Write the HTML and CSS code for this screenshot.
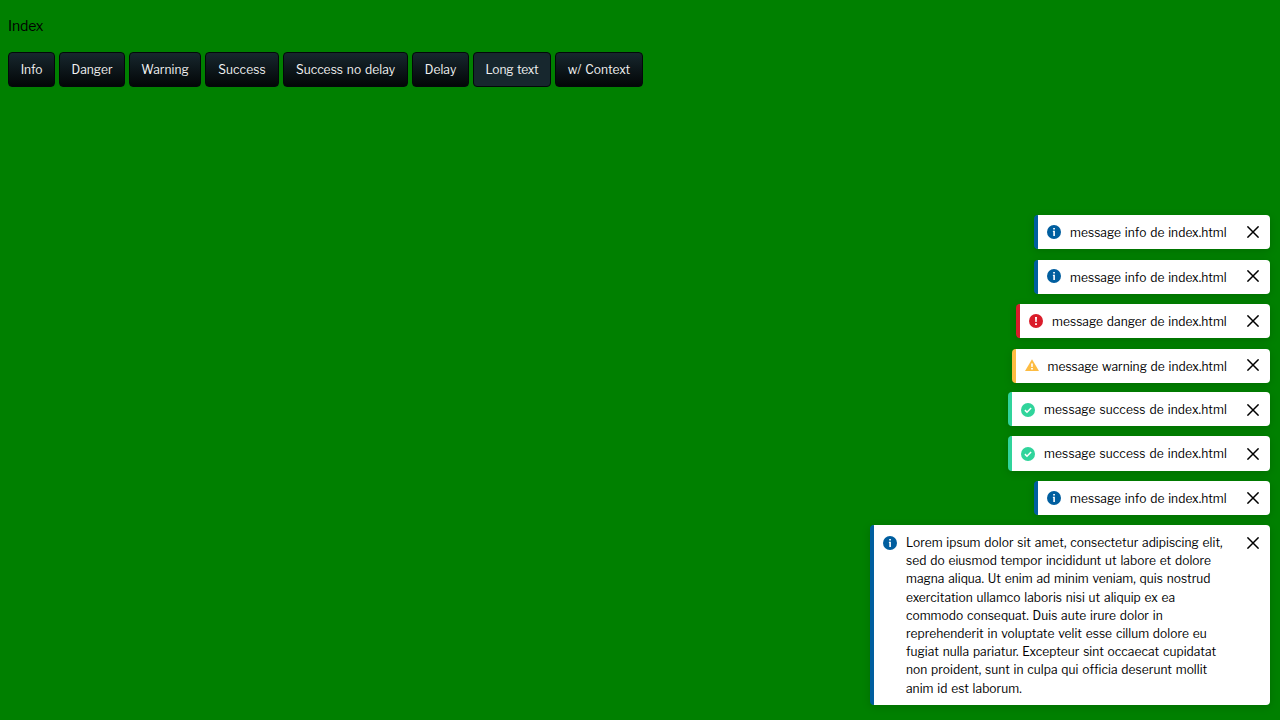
FILE: index.html
```
<!DOCTYPE html>
<html lang="en">
<head>
<meta charset="utf-8">
<title>Index</title>
<link rel="stylesheet" href="styles.css">
</head>
<body>
<svg class="defs" width="0" height="0">
  <symbol id="info" viewBox="0 0 14 14"><circle cx="7" cy="7" r="7" fill="currentColor"/><path fill="#fff" d="M6.2 3h1.7v1.6H6.2zM5.9 5.7h2V11H6.3V6.9h-.4z"/></symbol>
  <symbol id="danger" viewBox="0 0 14 14"><circle cx="7" cy="7" r="7" fill="currentColor"/><path fill="#fff" d="M6 3h2l-.3 5H6.3zM6.1 9.2h1.8V11H6.1z"/></symbol>
  <symbol id="warning" viewBox="0 0 14 14"><path fill="currentColor" d="M7 1.2l7 11.8H0z"/><path fill="#fff" d="M6.1 5.5h1.8l-.2 3.6H6.3zM6.1 10.1h1.8v1.5H6.1z"/></symbol>
  <symbol id="success" viewBox="0 0 14 14"><circle cx="7" cy="7" r="7" fill="currentColor"/><path fill="none" stroke="#fff" stroke-width="1.5" d="M3.9 7.1l2.1 2.1L10.1 5"/></symbol>
  <symbol id="close" viewBox="0 0 12 12"><path fill="none" stroke="#000" stroke-width="1.5" d="M.4.4l11.2 11.2M11.6.4L.4 11.6"/></symbol>
</svg>
<h1 class="title">Index</h1>
<nav class="buttons">
  <button class="btn info-btn">Info</button>
  <button class="btn danger-btn">Danger</button>
  <button class="btn warning-btn">Warning</button>
  <button class="btn success-btn">Success</button>
  <button class="btn nodelay-btn">Success no delay</button>
  <button class="btn delay-btn">Delay</button>
  <button class="btn long-btn active">Long text</button>
  <button class="btn context-btn">w/ Context</button>
</nav>
<section class="toasts">
  <div class="toast info"><svg class="icon"><use href="#info"/></svg><p class="text">message info de index.html</p><svg class="close"><use href="#close"/></svg></div>
  <div class="toast info raised"><svg class="icon"><use href="#info"/></svg><p class="text">message info de index.html</p><svg class="close"><use href="#close"/></svg></div>
  <div class="toast danger"><svg class="icon"><use href="#danger"/></svg><p class="text">message danger de index.html</p><svg class="close"><use href="#close"/></svg></div>
  <div class="toast warning raised"><svg class="icon"><use href="#warning"/></svg><p class="text">message warning de index.html</p><svg class="close"><use href="#close"/></svg></div>
  <div class="toast success lowered"><svg class="icon"><use href="#success"/></svg><p class="text">message success de index.html</p><svg class="close"><use href="#close"/></svg></div>
  <div class="toast success lowered"><svg class="icon"><use href="#success"/></svg><p class="text">message success de index.html</p><svg class="close"><use href="#close"/></svg></div>
  <div class="toast info"><svg class="icon"><use href="#info"/></svg><p class="text">message info de index.html</p><svg class="close"><use href="#close"/></svg></div>
  <div class="toast info long lowered"><svg class="icon"><use href="#info"/></svg><p class="text">Lorem ipsum dolor sit amet, consectetur adipiscing elit,<br>sed do eiusmod tempor incididunt ut labore et dolore<br>magna aliqua. Ut enim ad minim veniam, quis nostrud<br>exercitation ullamco laboris nisi ut aliquip ex ea<br>commodo consequat. Duis aute irure dolor in<br>reprehenderit in voluptate velit esse cillum dolore eu<br>fugiat nulla pariatur. Excepteur sint occaecat cupidatat<br>non proident, sunt in culpa qui officia deserunt mollit<br>anim id est laborum.</p><svg class="close"><use href="#close"/></svg></div>
</section>
</body>
</html>
```
FILE: styles.css
```
* { box-sizing: border-box; }
body {
  margin: 0;
  height: 720px;
  padding: 16px 10px 15px 8px;
  display: flex;
  flex-direction: column;
  overflow: hidden;
  background: #008000;
  color: #000;
  font: 12px/18.19px "Libre Franklin", "Liberation Sans", Arial, sans-serif;
  letter-spacing: .05px;
  word-spacing: 1.15px;
}
.defs { position: absolute; }
.title { margin: 0 0 16px; font-size: 14px; font-weight: 400; line-height: 20px; letter-spacing: -.15px; }
.buttons { display: flex; gap: 4px; }
.btn {
  height: 35px;
  padding: 1px 0 0;
  border: 1px solid #03080a;
  border-radius: 4px;
  background: linear-gradient(#17272e, #030607);
  color: #f2f2f2;
  font: inherit;
  letter-spacing: .06px;
  word-spacing: inherit;
  white-space: nowrap;
}
.btn.active { background: #17272e; }
.info-btn { width: 47px; letter-spacing: -.1px; }
.danger-btn { width: 66px; }
.warning-btn { width: 72px; }
.success-btn { width: 74px; letter-spacing: .12px; }
.nodelay-btn { width: 125px; }
.delay-btn { width: 57px; }
.long-btn { width: 78px; letter-spacing: -.15px; }
.context-btn { width: 88px; }
.toasts { display: flex; flex-direction: column; align-items: flex-end; margin-top: auto; }
.toast {
  display: flex;
  align-items: flex-start;
  height: 34px;
  margin-bottom: 10px;
  padding: 8px 11px 0 9px;
  border-left: 4px solid;
  border-radius: 4px;
  background: #fff;
  box-shadow: 0 2px 8px rgba(0, 0, 0, .15);
}
.toast:nth-child(1), .toast:nth-child(3) { margin-bottom: 11px; }
.toast:nth-child(4) { margin-bottom: 9px; }
.toast:nth-child(6) { height: 35px; }
.toast.info { width: 236px; color: #005e9f; }
.toast.danger { width: 254px; color: #da1c2a; }
.toast.warning { width: 258px; color: #fdbc42; }
.toast.success { width: 262px; color: #30d49b; }
.toast.long { width: 400px; height: 180px; margin-bottom: 0; }
.icon { flex: none; width: 14px; height: 14px; margin: 2px 9px 0 0; }
.close { flex: none; width: 12px; height: 12px; margin-top: 3px; }
.raised .icon { margin-top: 1px; }
.raised .close { margin-top: 2px; }
.lowered .icon { margin-top: 3px; }
.lowered .close { margin-top: 4px; }
.text { flex: 1; margin: 1px 0 0; color: #000; white-space: nowrap; }
.warning .text { margin-left: -.5px; letter-spacing: .02px; }
.success .text { letter-spacing: .13px; }
.long .text { margin-top: 1.06px; letter-spacing: .04px; }
```
